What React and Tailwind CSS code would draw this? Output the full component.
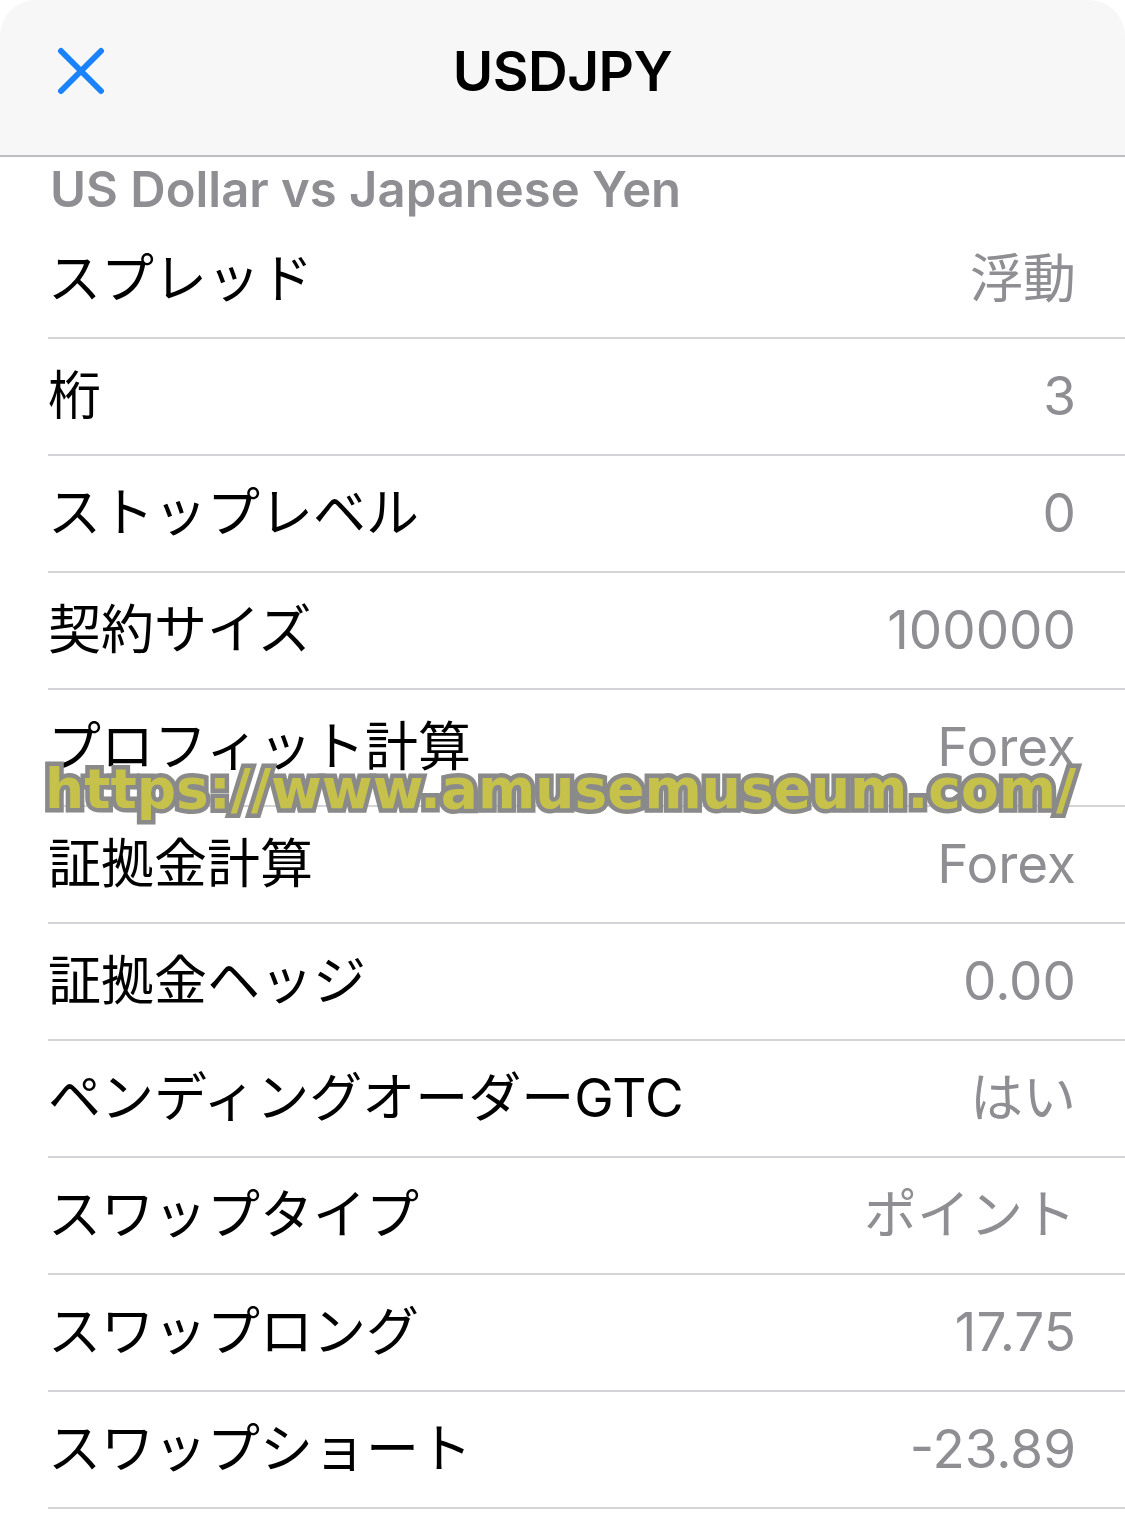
const rows = [
  { label: 'スプレッド', value: '浮動' },
  { label: '桁', value: '3' },
  { label: 'ストップレベル', value: '0' },
  { label: '契約サイズ', value: '100000' },
  { label: 'プロフィット計算', value: 'Forex' },
  { label: '証拠金計算', value: 'Forex' },
  { label: '証拠金ヘッジ', value: '0.00' },
  { label: 'ペンディングオーダーGTC', value: 'はい' },
  { label: 'スワップタイプ', value: 'ポイント' },
  { label: 'スワップロング', value: '17.75' },
  { label: 'スワップショート', value: '-23.89' },
];

function CloseIcon() {
  return (
    <svg width="48" height="48" viewBox="0 0 48 48" fill="none">
      <path d="M4 4L44 44M44 4L4 44" stroke="#1a82fb" strokeWidth="6" strokeLinecap="round" />
    </svg>
  );
}

export default function App() {
  return (
    <div className="relative min-h-[1516px] w-full bg-white font-['Inter','Noto_Sans_CJK_JP',sans-serif]">
      <header className="h-[157px] bg-[#f7f7f8] border-b-2 border-[#bdbdbf] rounded-t-[36px] pt-[40px]">
        <div className="grid grid-cols-[1fr_auto_1fr] items-center h-[60px] -mt-[10px]">
          <div className="pl-[57px] flex items-center">
            <CloseIcon />
          </div>
          <h1 className="text-[55px] font-semibold text-black tracking-[-0.5px]">USDJPY</h1>
          <div />
        </div>
      </header>

      <div className="h-[65px] pl-[50px] flex items-center">
        <p className="text-[49px] font-semibold text-[#8e8e93]">US Dollar vs Japanese Yen</p>
      </div>

      <div className="ml-[48px]">
        {rows.map((r) => (
          <div
            key={r.label}
            className="h-[117px] border-b-2 border-[#d4d4d8] flex items-center justify-between pr-[49px]"
          >
            <span className="text-[53px] text-black leading-none">{r.label}</span>
            <span className="text-[53px] text-[#8e8e93] leading-none">{r.value}</span>
          </div>
        ))}
      </div>

      <div className="absolute left-[45px] top-[762px] pointer-events-none">
        <span className="font-['DejaVu_Sans',sans-serif] font-bold text-[55px] leading-none text-[#c6c14b] [-webkit-text-stroke:9px_#8a8a8a] [paint-order:stroke_fill] whitespace-nowrap">
          https://www.amusemuseum.com/
        </span>
      </div>
    </div>
  );
}
